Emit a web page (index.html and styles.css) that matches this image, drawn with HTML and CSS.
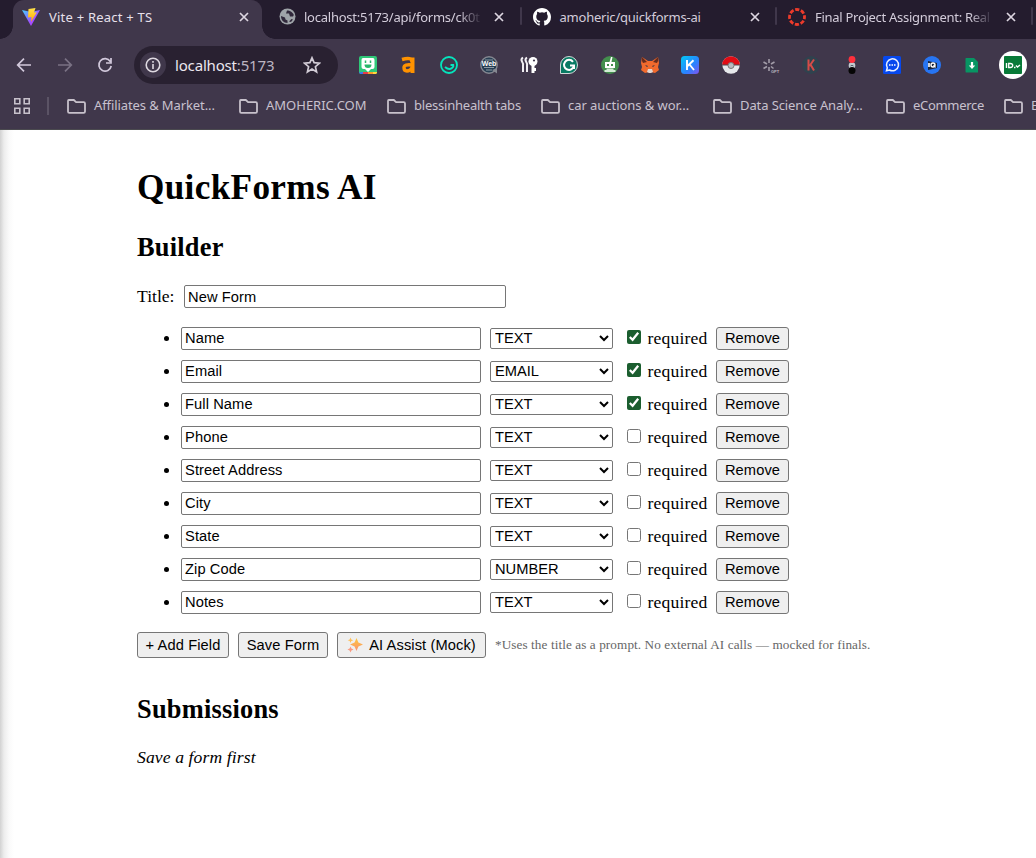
FILE: index.html
```
<!DOCTYPE html>
<html lang="en">
<head>
<meta charset="utf-8">
<title>Vite + React + TS</title>
<link rel="stylesheet" href="styles.css">
</head>
<body>
<svg class="defs" width="0" height="0">
  <defs>
    <symbol id="close" viewBox="0 0 10 10"><path d="M1 1l8 8M9 1l-8 8" fill="none" stroke="currentColor" stroke-width="1.7"/></symbol>
    <symbol id="folder" viewBox="0 0 19 15"><path d="M1.8 1h5l2.3 2.2h7.6q1.3 0 1.3 1.3v8q0 1.3-1.3 1.3H2.3Q1 13.800 1 12.500V2q0-1 .8-1z" fill="none" stroke="#c7c1cb" stroke-width="1.8"/></symbol>
  </defs>
</svg>
<header class="browser">
  <div class="tabstrip">
    <div class="tab tab-active">
      <svg class="favicon" viewBox="0 0 18 18"><defs><linearGradient id="v" x2="1" y2="1"><stop stop-color="#41d1ff"/><stop offset=".6" stop-color="#a050ff"/><stop offset="1" stop-color="#bd34fe"/></linearGradient><linearGradient id="b" x2="0" y2="1"><stop stop-color="#ffe34a"/><stop offset="1" stop-color="#ffa800"/></linearGradient></defs><path d="M0 2l9 2 9-2-9 16z" fill="url(#v)"/><path d="M6.500 1L13.500 0l-1.500 4.500 2.800-.2L9 14l.5-5-3.500.5z" fill="url(#b)"/></svg>
      <span class="tab-title t1">Vite + React + TS</span>
      <svg class="close"><use href="#close"/></svg>
    </div>
    <div class="tab">
      <svg class="favicon" viewBox="0 0 18 18"><circle cx="8.500" cy="8.500" r="8" fill="#9fa4a9"/><path d="M2 8l4 1.500.5 2 2 1v2.500C4.500 15 2 12 2 8zM8 2.500l-1 3h3l1 3 3 0 .8-1.500C14 4.500 11 2.500 8 2.500zM10 13.500l2.500-2.500 1.500.5-2 2.500z" fill="#30283b"/></svg>
      <span class="tab-title fade t2">localhost:5173/api/forms/ck0t</span>
      <svg class="close"><use href="#close"/></svg>
    </div>
    <div class="tab tab-late">
      <svg class="favicon" viewBox="0 0 16 16"><path fill="#fff" d="M8 0C3.580 0 0 3.580 0 8c0 3.540 2.290 6.530 5.470 7.590.4.070.55-.17.55-.38 0-.19-.01-.82-.01-1.490-2.010.37-2.530-.49-2.690-.94-.09-.23-.48-.94-.82-1.130-.28-.15-.68-.52-.01-.53.63-.01 1.080.58 1.230.82.72 1.210 1.870.87 2.330.66.07-.52.28-.87.51-1.070-1.780-.2-3.640-.89-3.640-3.950 0-.87.31-1.590.82-2.150-.08-.2-.36-1.020.08-2.120 0 0 .67-.21 2.200.82a7.600 7.600 0 014 0c1.530-1.040 2.200-.82 2.200-.82.44 1.100.16 1.920.08 2.120.51.56.82 1.270.82 2.150 0 3.070-1.870 3.750-3.650 3.950.29.25.54.73.54 1.480 0 1.070-.01 1.930-.01 2.200 0 .21.15.46.55.38A8 8 0 0016 8c0-4.420-3.580-8-8-8z"/></svg>
      <span class="tab-title t3">amoheric/quickforms-ai</span>
      <svg class="close"><use href="#close"/></svg>
    </div>
    <div class="tab tab-late">
      <svg class="favicon" viewBox="0 0 18 18"><circle cx="9" cy="9" r="7.500" fill="none" stroke="#ed3b2b" stroke-width="2.800" stroke-dasharray="4.200 1.690" stroke-dashoffset="2.100"/></svg>
      <span class="tab-title fade t4">Final Project Assignment: Real</span>
      <svg class="close"><use href="#close"/></svg>
    </div>
  </div>

  <div class="toolbar">
    <svg class="nav" viewBox="0 0 16 16"><path d="M15 8H2M8 1.700L1.700 8 8 14.300"/></svg>
    <svg class="nav nav-off" viewBox="0 0 16 16"><path d="M1 8h13M8 1.700L14.300 8 8 14.300"/></svg>
    <svg class="nav" viewBox="0 0 16 16"><path d="M13.300 4.500A6.200 6.200 0 1 0 14.200 9M14 1v5H9"/></svg>
    <div class="omnibox">
      <div class="info"><svg width="16" height="16" viewBox="0 0 16 16"><circle cx="8" cy="8" r="6.800" fill="none" stroke="#ded9e1" stroke-width="1.600"/><path d="M8 7v5M8 4v1.700" stroke="#ded9e1" stroke-width="1.600"/></svg></div>
      <span class="url">localhost<span class="port">:5173</span></span>
      <svg class="star" viewBox="0 0 18 18"><path d="M9 1.800l2.100 4.900 5.300.5-4 3.500 1.200 5.200L9 13.100l-4.600 2.800 1.200-5.200-4-3.500 5.300-.5z" fill="none" stroke="#d2ccd6" stroke-width="1.700"/></svg>
    </div>
    <div class="extensions">
      <svg viewBox="0 0 18 18"><rect width="18" height="18" rx="2" fill="#2fc878"/><path d="M0 16h4v2H1z" fill="#3978ec"/><path d="M4 16h5v2H4z" fill="#e83d48"/><path d="M9 16h5v2H9z" fill="#f99c28"/><path d="M14 16h4v1l-1 1h-3z" fill="#ffd63c"/><path d="M4 2h10q1.500 0 1.500 2v7q0 2-2 2H12l-3 3-3-3H4.500q-2 0-2-2V4Q2.500 2 4 2z" fill="#fff"/><path d="M6.500 4.500v2.500M11.500 4.500v2.500" stroke="#28b66a" stroke-width="1.500"/><path d="M5.500 8.500h7q0 3.500-3.500 3.500T5.500 8.500z" fill="#28b66a"/></svg>
      <svg viewBox="0 0 18 18"><path d="M3 3.500Q13 .5 13 6M13 9Q5 8 5 11.500T8 15q3 0 5-3" fill="none" stroke="#ff9200" stroke-width="3.400"/><path d="M11.500 1.500h4V17h-4z" fill="#ff9200"/></svg>
      <svg viewBox="0 0 18 18"><circle cx="9" cy="9" r="8" fill="none" stroke="#05e5bd" stroke-width="1.800"/><path d="M5 11q4 3.500 7 1 1.800-1.500 1.300-3H10.500" fill="none" stroke="#05e5bd" stroke-width="1.900"/></svg>
      <svg viewBox="0 0 18 18"><circle cx="9" cy="9" r="8.200" fill="#273e53" stroke="#858891" stroke-width="1.400"/><path d="M12 14l5 3.500V12" fill="#858891"/><text x="9" y="10" class="tiny" fill="#fff">Web</text><path d="M4 11.500h10M6 14h6M5 4h8" stroke="#8d9ba6"/></svg>
      <svg viewBox="0 0 18 18"><path d="M3 1.500q-2.500 1.500-1 4t1 3.500v7M7 1.500q-2.500 1.500-1 4t1 3.500v7" fill="none" stroke="#f1eef3" stroke-width="2"/><circle cx="13" cy="5.500" r="4.500" fill="#fff"/><path d="M11.500 8h3v9h-3zM14 12h2v3h-2z" fill="#fff"/><circle cx="14" cy="4.500" r="1.100" fill="#40374b"/></svg>
      <svg viewBox="0 0 18 18"><path d="M9 .5A8.500 8.500 0 1 1 9 17.500H.5V9A8.500 8.500 0 0 1 9 .5z" fill="#087a63" stroke="#d1d7d7"/><path d="M13 5.800A5 5 0 1 0 14 9.500H10M14 13V9.500" fill="none" stroke="#fff" stroke-width="2"/></svg>
      <svg viewBox="0 0 18 18"><circle cx="9" cy="9" r="9" fill="#438e4d"/><path d="M8.500 6l1.500-5h1.500L10.500 6H14v6H4V6z" fill="#fff"/><path d="M5.500 12.500h7v1.500h2v2h-11v-2h2z" fill="#d3ebd5"/><path d="M6 8h2v2H6zM10 8h2v2h-2z" fill="#438e4d"/></svg>
      <svg viewBox="0 0 18 18"><path d="M1 1l6 4h4l6-4 1 6-1 4 1 3-4 3-4-1H8l-4 1-4-3 1-3-1-4z" fill="#f16a2d"/><path d="M1 1l5 5-4 1-1-2zM17 1l-5 5 4 1 1-2z" fill="#682c1c"/><path d="M4 9l3 1-1 1zM14 9l-3 1 1 1z" fill="#293247"/><path d="M7 13h4l1 3-2 1H8l-2-1z" fill="#dfd5d1"/></svg>
      <svg viewBox="0 0 18 18"><defs><linearGradient id="k" x2="1" y2="1"><stop stop-color="#00c9f5"/><stop offset=".6" stop-color="#2b81ff"/><stop offset="1" stop-color="#8255ed"/></linearGradient></defs><rect width="18" height="18" rx="3.500" fill="url(#k)"/><path d="M6 4v10M12.500 4.300L6.500 10M8.500 8.500l4.500 5.500" stroke="#fff" stroke-width="1.900" fill="none"/></svg>
      <svg viewBox="0 0 18 18"><circle cx="9" cy="9" r="8.700" fill="#e7e9ec"/><path d="M.2 9a8.800 8.800 0 0 1 17.600 0z" fill="#e10c15"/><path d="M0 9h18" stroke="#4c4a50"/><circle cx="9" cy="9.500" r="3" fill="#b9bbc0" stroke="#777"/></svg>
      <svg viewBox="0 0 18 18"><path d="M7 3v4M7 11v4M1.500 6l3.500 2M12.500 6L9 8M1.500 12.500l3.500-2M11.500 12.500l-2.500-2" stroke="#a29ca8" stroke-width="1.600"/><text x="13" y="17" class="micro" fill="#bbb4bf">GPT</text></svg>
      <svg viewBox="0 0 18 18"><circle cx="9" cy="9" r="9" fill="#30424e"/><path d="M6.500 3.500v11M12 3.500L7.500 10M8.500 8.500L12 14.500" fill="none" stroke="#d44c48" stroke-width="2"/></svg>
      <svg viewBox="0 0 18 18"><circle cx="9" cy="9.500" r="3.300" fill="#c2c9cf"/><circle cx="9" cy="3.500" r="3.400" fill="#ff303c"/><circle cx="9" cy="14.500" r="3.500" fill="#050505"/><path d="M7.500 10q1.500-1.500 3 0" stroke="#57616b" fill="none"/></svg>
      <svg viewBox="0 0 18 18"><rect width="18" height="18" rx="1.500" fill="#0648ee"/><path d="M3.500 14.800l.8-3a6 6 0 1 1 2.200 2.200z" fill="none" stroke="#e9f1ff" stroke-width="1.500"/><path d="M6 9h1.500M8.500 9H10M11 9h1.500" stroke="#fff" stroke-width="1.500"/></svg>
      <svg viewBox="0 0 18 18"><circle cx="9" cy="9" r="9" fill="#2775f2"/><path d="M5 5l9 2v5l-9 2z" fill="#18253b"/><path d="M6 7v4" stroke="#fff" stroke-width="1.600"/><circle cx="10" cy="9" r="2" stroke="#fff" stroke-width="1.400" fill="none"/><path d="M10.500 9l2 2.500" stroke="#fff" stroke-width="1.200"/></svg>
      <svg viewBox="0 0 18 18"><path d="M3 2h8l4 4v10.500H3Q2.500 16.500 2.500 15V3Q2.500 2 3 2z" fill="#079563"/><path d="M9 6v5" stroke="#fff" stroke-width="2.200"/><path d="M5.800 9.500L9 13l3.200-3.500z" fill="#fff"/></svg>
      <div class="profile"><svg viewBox="0 0 18 18"><rect width="18" height="18" rx="1" fill="#087a38"/><path d="M2.500 7v5M10 11.500h1.500M12 9.500l1.500 1.500 2.500-2" stroke="#fff" stroke-width="1.400" fill="none"/><path d="M4.700 7.500h1.500q2.500 0 2.500 2t-2.500 2H4.700z" stroke="#fff" stroke-width="1.300" fill="none"/></svg></div>
    </div>
  </div>

  <div class="bookmarks">
    <svg class="apps" viewBox="0 0 16 16"><path d="M.8.8h5v5h-5zM10.200.8h5v5h-5zM.8 10.200h5v5h-5zM10.200 10.200h5v5h-5z" fill="none" stroke="#c7c1cb" stroke-width="1.600"/></svg>
    <div class="bm"><svg><use href="#folder"/></svg><span class="m1">Affiliates &amp; Market...</span></div>
    <div class="bm"><svg><use href="#folder"/></svg><span>AMOHERIC.COM</span></div>
    <div class="bm"><svg><use href="#folder"/></svg><span class="m3">blessinhealth tabs</span></div>
    <div class="bm"><svg><use href="#folder"/></svg><span class="m4">car auctions &amp; wor...</span></div>
    <div class="bm"><svg><use href="#folder"/></svg><span class="m1">Data Science Analy...</span></div>
    <div class="bm"><svg><use href="#folder"/></svg><span class="m6">eCommerce</span></div>
    <div class="bm"><svg><use href="#folder"/></svg><span>E</span></div>
  </div>
</header>

<main class="page">
  <h1>QuickForms AI</h1>
  <h2>Builder</h2>
  <label class="title-row"><span>Title:</span><input type="text" value="New Form"></label>
  <ul class="fields">
    <li><div class="field"><input type="text" value="Name"><select><option>TEXT</option></select><label><input type="checkbox" checked>required</label><button>Remove</button></div></li>
    <li><div class="field"><input type="text" value="Email"><select><option>EMAIL</option></select><label><input type="checkbox" checked>required</label><button>Remove</button></div></li>
    <li><div class="field"><input type="text" value="Full Name"><select><option>TEXT</option></select><label><input type="checkbox" checked>required</label><button>Remove</button></div></li>
    <li><div class="field"><input type="text" value="Phone"><select><option>TEXT</option></select><label><input type="checkbox">required</label><button>Remove</button></div></li>
    <li><div class="field"><input type="text" value="Street Address"><select><option>TEXT</option></select><label><input type="checkbox">required</label><button>Remove</button></div></li>
    <li><div class="field"><input type="text" value="City"><select><option>TEXT</option></select><label><input type="checkbox">required</label><button>Remove</button></div></li>
    <li><div class="field"><input type="text" value="State"><select><option>TEXT</option></select><label><input type="checkbox">required</label><button>Remove</button></div></li>
    <li><div class="field"><input type="text" value="Zip Code"><select><option>NUMBER</option></select><label><input type="checkbox">required</label><button>Remove</button></div></li>
    <li><div class="field"><input type="text" value="Notes"><select><option>TEXT</option></select><label><input type="checkbox">required</label><button>Remove</button></div></li>
  </ul>
  <div class="actions">
    <button class="add">+ Add Field</button>
    <button class="save">Save Form</button>
    <button class="assist"><svg width="16" height="16" viewBox="0 0 16 16"><defs><linearGradient id="s" x2="0" y2="1"><stop stop-color="#ffc83d"/><stop offset="1" stop-color="#f99170"/></linearGradient></defs><path d="M9.500 1l1.900 4.600L16 7.500l-4.600 1.900L9.500 14 7.600 9.400 3 7.500l4.600-1.900z" fill="url(#s)"/><path d="M3.500.5l.8 2 2 .8-2 .8-.8 2-.8-2-2-.8 2-.8z" fill="#ffc05a"/><path d="M3.500 9.500l.9 2.100 2.100.9-2.100.9-.9 2.100-.9-2.100-2.100-.9 2.100-.9z" fill="#fa9a80"/></svg>AI Assist (Mock)</button>
    <small>*Uses the title as a prompt. No external AI calls — mocked for finals.</small>
  </div>
  <h2 class="submissions">Submissions</h2>
  <p><em>Save a form first</em></p>
</main>
</body>
</html>
```
FILE: styles.css
```
* { box-sizing: border-box; }
body { margin: 0; width: 1036px; height: 858px; overflow: hidden; background: #fff; color: #000; font: 17.6px/20px "Liberation Serif", serif; }
.defs { display: block; }
.browser { width: 1036px; height: 130px; overflow: hidden; background: #40374b; border-bottom: 1px solid #4b4a4f; color: #d3ccda; font: 13px/18px "Noto Sans", sans-serif; }
.browser svg { flex: none; }

.tabstrip { display: flex; height: 39px; padding-left: 13px; background: #241c2e; }
.tab { display: flex; flex: none; align-items: center; width: 255.500px; height: 33px; padding: 0 14px 0 17px; position: relative; }
.tab:not(.tab-active)::after { content: ""; width: 2px; height: 18px; border-radius: 1px; background: #40374b; position: absolute; right: -4px; top: 7px; }
.tab.tab-late { padding: 0 13px 0 15px; }
.tab-late .favicon { margin-right: 9px; }
.tab-active { width: 249px; height: 39px; padding: 0 13px 6px 9px; background: #40374b; border-radius: 11px 11px 0 0; color: #e7e0ec; }
.tab-active::before, .tab-active::after { content: ""; width: 13px; height: 13px; position: absolute; bottom: 0; }
.tab-active::before { left: -13px; background: radial-gradient(circle at 0 0, transparent 12.500px, #40374b 13px); }
.tab-active::after { right: -13px; background: radial-gradient(circle at 100% 0, transparent 12.500px, #40374b 13px); }
.favicon { width: 18px; height: 18px; margin-right: 7px; }
.tab-active .favicon { margin-right: 9px; }
.tab-title { flex: none; white-space: nowrap; }
.t1 { letter-spacing: .22px; }
.t2 { letter-spacing: -.24px; }
.t3 { letter-spacing: -.22px; }
.t4 { letter-spacing: -.28px; }
.fade { width: 178px; overflow: hidden; -webkit-mask-image: linear-gradient(90deg, #000 87%, transparent); mask-image: linear-gradient(90deg, #000 87%, transparent); }
.close { width: 10px; height: 10px; margin-left: auto; color: #ddd6e1; }

.toolbar { display: flex; align-items: center; height: 52px; padding-left: 16px; }
.nav { width: 16px; height: 16px; margin-right: 25px; fill: none; stroke: #d2c9dc; stroke-width: 1.700; }
.nav + .nav { margin-right: 24px; }
.nav + .nav + .nav { margin-right: 21px; }
.nav.nav-off { stroke: #7a7284; }
.omnibox { display: flex; flex: none; align-items: center; width: 204px; height: 38px; padding: 0 17px 0 6px; border-radius: 19px; background: #292131; }
.info { display: flex; align-items: center; justify-content: center; width: 26px; height: 26px; margin-right: 9px; border-radius: 50%; background: #40374b; }
.url { color: #ece7ef; font-size: 15px; letter-spacing: -.17px; }
.port { color: #bcb5c1; }
.star { width: 18px; height: 18px; margin-left: auto; }
.extensions { display: flex; flex: none; align-items: center; gap: 22.300px; margin-left: 21px; }
.extensions svg { display: block; width: 18px; height: 18px; overflow: visible; }
.profile { display: flex; align-items: center; justify-content: center; width: 28px; height: 28px; margin: 0 -5px; border-radius: 50%; background: #fff; flex: none; }
.tiny { font: bold 7px "Liberation Sans", sans-serif; text-anchor: middle; }
.micro { font: bold 4px "Liberation Sans", sans-serif; text-anchor: middle; }

.bookmarks { display: grid; grid-template-columns: 53px 172px 148px 154px 172px 173px 118px 80px; align-items: center; height: 30px; padding-left: 14px; color: #c8c1ce; }
.bookmarks::before { content: ""; width: 2px; height: 18px; background: #5b5365; grid-area: 1 / 1; margin-left: 33px; }
.apps { width: 16px; height: 16px; grid-area: 1 / 1; }
.bm { display: flex; align-items: center; white-space: nowrap; }
.bm svg { width: 19px; height: 15px; margin-right: 8px; }
.bm span { margin-top: -2px; }
.m1 { letter-spacing: -.1px; }
.m3 { letter-spacing: -.22px; }
.m4 { letter-spacing: -.05px; }
.m6 { letter-spacing: -.3px; }

.page { height: 728px; padding: 38px 0 0 137px; background: linear-gradient(90deg, #d2d2d2 0, #ededed 4px, #fafafa 9px, #fff 14px); }
h1 { margin: 0; font-size: 35.200px; line-height: 40px; letter-spacing: .33px; }
h2 { margin: 24px 0 0; font-size: 26.400px; line-height: 30px; letter-spacing: .22px; }
.title-row { display: flex; align-items: center; height: 23px; margin-top: 23px; }
.title-row span { margin-top: -2px; }
input[type="text"], select, button { font: 14.667px/17px "Liberation Sans", sans-serif; color: #000; margin: 0; }
input[type="text"] { flex: none; width: 300px; height: 23px; padding: 1px 3px; border: 1px solid #767676; border-radius: 2px; background: #fff; letter-spacing: .1px; }
.title-row input[type="text"] { width: 322px; margin-left: 9.500px; }
.fields { margin: 18px 0 0; padding: 0 0 0 44px; }
.fields li { height: 23px; margin-bottom: 10px; line-height: 23px; }
.field { display: flex; align-items: center; height: 23px; }
select { width: 123px; height: 21px; margin-left: 9px; padding: 0; border: 1px solid #767676; border-radius: 2px; background: #fff; }
.field label { display: flex; width: 94px; margin-left: 9px; padding-left: 5px; letter-spacing: .15px; }
.field input[type="checkbox"] { width: 14px; height: 14px; margin: 3px 6.600px 0 0; accent-color: #1b5e2f; }
button { flex: none; border: 1px solid #767676; border-radius: 3px; background: #efefef; padding: 1px 0; white-space: nowrap; letter-spacing: .1px; }
.field button { width: 73px; height: 23px; }
.actions { display: flex; align-items: center; gap: 9px; margin-top: 19px; }
.actions button { height: 26px; }
.actions .add { width: 92px; }
.actions .save { width: 90px; }
.actions .assist { display: flex; align-items: center; justify-content: center; gap: 6px; width: 149px; }
small { font-size: 13.200px; line-height: 16px; color: #666; white-space: nowrap; letter-spacing: .095px; margin-top: -1px; }
.submissions { margin-top: 36px; }
p { margin: 23px 0 0; letter-spacing: .11px; }
```
